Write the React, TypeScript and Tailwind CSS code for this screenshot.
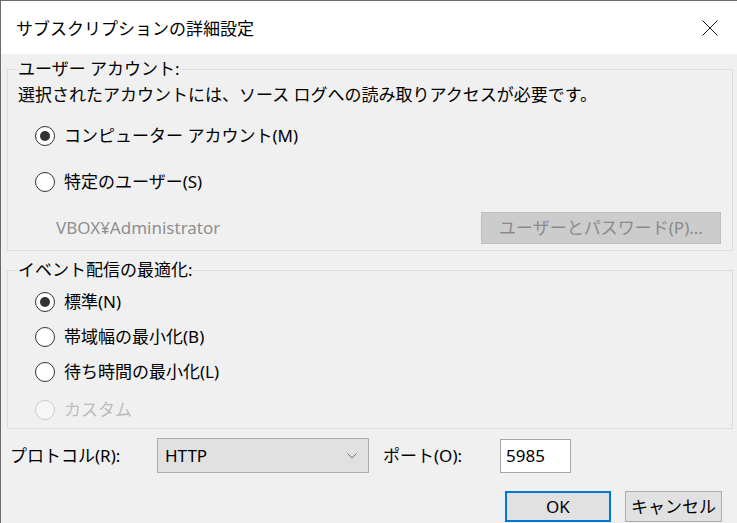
import React from 'react';

function Radio({ label, checked, disabled, className }: { label: string; checked?: boolean; disabled?: boolean; className?: string }) {
	return (
		<div className={`flex items-center h-[20px] pl-[27px] ${className ?? ''}`}>
			<div
				className={`w-[20px] h-[20px] rounded-full border-[1.5px] flex items-center justify-center ${
					disabled ? 'border-[#cccccc] bg-[#f6f6f6]' : 'border-[#333333] bg-white'
				}`}
			>
				{checked && <div className="w-[10px] h-[10px] rounded-full bg-[#333333]" />}
			</div>
			<span className={`ml-[9px] leading-[20px] ${disabled ? 'text-[#bdbdbd]' : 'text-black'}`}>{label}</span>
		</div>
	);
}

export default function App() {
	return (
		<div className="w-[737px] h-[523px] overflow-hidden bg-[#f0f0f0] border-t border-l border-[#6b6b6b] font-['Noto_Sans','Noto_Sans_CJK_JP',sans-serif] text-[17px] text-black">
			{/* title bar */}
			<div className="h-[53px] bg-white flex items-center justify-between pl-[15px] pr-[19px]">
				<span className="text-[17px] leading-[20px] mt-[3px]">サブスクリプションの詳細設定</span>
				<svg width="16" height="16" viewBox="0 0 16 16" className="mt-[1px]">
					<path d="M0.5 0.5 L15.5 15.5 M15.5 0.5 L0.5 15.5" stroke="#1a1a1a" strokeWidth="1" fill="none" />
				</svg>
			</div>

			{/* user account */}
			<fieldset className="ml-[6px] mt-[5px] w-[726px] border border-[#dcdcdc] pb-[6px]">
				<legend className="ml-[10px] leading-[20px]">ユーザー アカウント:</legend>
				<p className="mt-[6px] pl-[10px] leading-[20px]">選択されたアカウントには、ソース ログへの読み取りアクセスが必要です。</p>
				<Radio className="mt-[21px]" label="コンピューター アカウント(M)" checked />
				<Radio className="mt-[26px]" label="特定のユーザー(S)" />
				<div className="mt-[20px] h-[32px] flex items-center justify-between pl-[48px] pr-[11px]">
					<span className="text-[#8f8f8f] leading-[20px]">VBOX¥Administrator</span>
					<button className="w-[240px] h-[32px] bg-[#cccccc] border border-[#bfbfbf] text-[#8b8b8b] leading-[20px]">
						ユーザーとパスワード(P)...
					</button>
				</div>
			</fieldset>

			{/* delivery optimisation */}
			<fieldset className="ml-[6px] mt-[9px] w-[726px] border border-[#dcdcdc] pb-[8px]">
				<legend className="ml-[10px] leading-[20px]">イベント配信の最適化:</legend>
				<Radio className="mt-[12px]" label="標準(N)" checked />
				<Radio className="mt-[15px]" label="帯域幅の最小化(B)" />
				<Radio className="mt-[15px]" label="待ち時間の最小化(L)" />
				<Radio className="mt-[18px]" label="カスタム" disabled />
			</fieldset>

			{/* protocol / port */}
			<div className="mt-[9px] flex items-center h-[35px]">
				<span className="ml-[9px] w-[147px] leading-[20px]">プロトコル(R):</span>
				<div className="w-[212px] h-[35px] bg-[#e1e1e1] border border-[#adadad] flex items-center justify-between pl-[7px] pr-[11px]">
					<span className="leading-[20px]">HTTP</span>
					<svg width="10" height="6" viewBox="0 0 10 6">
						<path d="M0.5 0.5 L5 5 L9.5 0.5" stroke="#707070" strokeWidth="1" fill="none" />
					</svg>
				</div>
				<span className="ml-[14px] w-[117px] leading-[20px]">ポート(O):</span>
				<div className="w-[71px] h-[34px] bg-white border border-[#a8a8a8] flex items-center pl-[5px]">
					<span className="leading-[20px]">5985</span>
				</div>
			</div>

			{/* buttons */}
			<div className="mt-[18px] flex justify-end gap-[14px] pr-[15px]">
				<button className="w-[106px] h-[31px] bg-[#e1e1e1] border-2 border-[#0078d7] leading-[20px]">OK</button>
				<button className="w-[97px] h-[31px] bg-[#e1e1e1] border border-[#adadad] leading-[20px]">キャンセル</button>
			</div>
		</div>
	);
}
